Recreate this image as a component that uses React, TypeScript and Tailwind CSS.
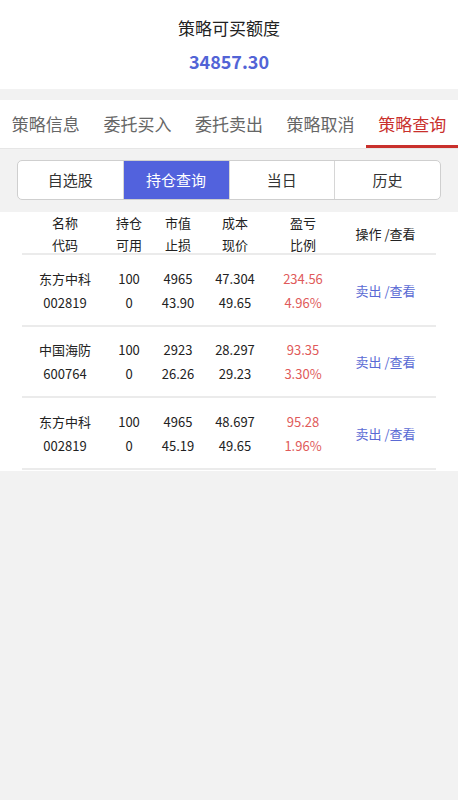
const font = "font-['Noto_Sans_CJK_SC','Noto_Sans',sans-serif]";

const tabs = ["策略信息", "委托买入", "委托卖出", "策略取消", "策略查询"];
const segs = ["自选股", "持仓查询", "当日", "历史"];

const rows = [
  { name: "东方中科", code: "002819", hold: "100", avail: "0", mv: "4965", stop: "43.90", cost: "47.304", price: "49.65", pl: "234.56", pct: "4.96%" },
  { name: "中国海防", code: "600764", hold: "100", avail: "0", mv: "2923", stop: "26.26", cost: "28.297", price: "29.23", pl: "93.35", pct: "3.30%" },
  { name: "东方中科", code: "002819", hold: "100", avail: "0", mv: "4965", stop: "45.19", cost: "48.697", price: "49.65", pl: "95.28", pct: "1.96%" },
];

const cols = "grid grid-cols-[86px_42px_56px_58px_78px_1fr]";

export default function App() {
  return (
    <div className={`min-h-[800px] w-[458px] bg-[#f2f2f2] ${font}`}>
      {/* 可买额度 */}
      <div className="mt-[2px] flex h-[87px] flex-col items-center bg-white pt-[14px]">
        <div className="text-[17px] leading-6 text-[#222]">策略可买额度</div>
        <div className="mt-[9px] text-[18px] font-bold leading-6 text-[#5264d6]">34857.30</div>
      </div>

      {/* tabs */}
      <div className="mt-[11px] flex h-[49px] border-b border-[#e6e6e6] bg-white">
        {tabs.map((t, i) => (
          <div
            key={t}
            className={`flex flex-1 items-center justify-center text-[17px] ${
              i === 4 ? "border-b-[3px] border-[#c9302c] pt-[3px] text-[#c9302c]" : "text-[#666]"
            }`}
          >
            {t}
          </div>
        ))}
      </div>

      {/* 分段 */}
      <div className="px-[17px] pb-[12px] pt-[11px]">
        <div className="flex h-[40px] overflow-hidden rounded-[5px] border border-[#cfcfcf] bg-white">
          {segs.map((s, i) => (
            <div
              key={s}
              className={`flex flex-1 items-center justify-center text-[15px] ${
                i > 0 ? "border-l border-[#d6d6d6]" : ""
              } ${i === 1 ? "bg-[#5262dd] text-white" : "text-[#333]"}`}
            >
              {s}
            </div>
          ))}
        </div>
      </div>

      {/* 持仓表 */}
      <div className="bg-white px-[22px] pb-[1px] text-[13px] text-[#222]">
        <div className={`${cols} h-[43px] items-center border-b-2 border-[#ebebeb] text-center leading-[22px]`}>
          <div>名称<br />代码</div>
          <div>持仓<br />可用</div>
          <div>市值<br />止损</div>
          <div>成本<br />现价</div>
          <div>盈亏<br />比例</div>
          <div className="pr-[7px]">操作 /查看</div>
        </div>
        {rows.map((r, i) => (
          <div
            key={i}
            className={`${cols} h-[71.5px] items-center border-b-2 border-[#ebebeb] pt-[2px] text-center leading-[24px]`}
          >
            <div>{r.name}<br />{r.code}</div>
            <div>{r.hold}<br />{r.avail}</div>
            <div>{r.mv}<br />{r.stop}</div>
            <div>{r.cost}<br />{r.price}</div>
            <div className="text-[#e05a5a]">{r.pl}<br />{r.pct}</div>
            <div className="pr-[7px] text-[#5a6ad4]">卖出 /查看</div>
          </div>
        ))}
      </div>
    </div>
  );
}
